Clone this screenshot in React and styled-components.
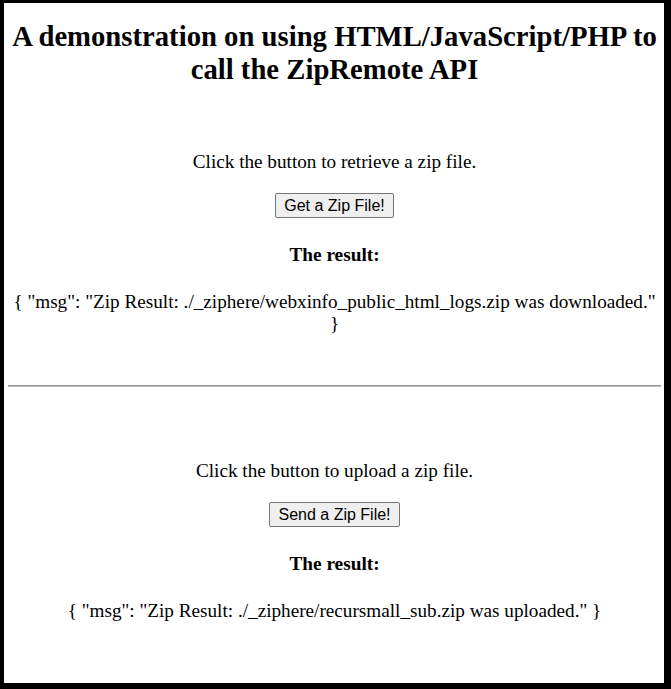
import React from "react";
import styled, { createGlobalStyle } from "styled-components";

const Global = createGlobalStyle`
  html, body { margin: 0; padding: 0; background: #000; }
  body { font-family: "Liberation Serif", "Times New Roman", serif; color: #000; }
`;

const Frame = styled.div`
  box-sizing: border-box;
  width: 671px;
  height: 689px;
  border-style: solid;
  border-color: #000;
  border-width: 3px 7px 6px 4px;
  background: #fff;
  padding: 0 3px 0 4px;
  overflow: hidden;
`;

const Title = styled.h1`
  margin: 17px 0 0;
  font-size: 28.7px;
  line-height: 33px;
  font-weight: bold;
  text-align: center;
`;

const Section = styled.section`
  display: flex;
  flex-direction: column;
  align-items: center;
  text-align: center;
  padding-top: ${(p) => p.$top}px;
`;

const Text = styled.p`
  margin: 0;
  font-size: 19.2px;
  line-height: 21px;
`;

const Button = styled.button`
  margin-top: 21px;
  height: 25px;
  padding: 0 8px;
  font-family: Arial, "Liberation Sans", sans-serif;
  font-size: 16px;
  color: #000;
  background: #efefef;
  border: 1px solid #767676;
  border-radius: 2px;
`;

const ResultLabel = styled.h4`
  margin: 26px 0 0;
  font-size: 19.3px;
  line-height: 21px;
  font-weight: bold;
`;

const Json = styled.p`
  margin: 26px 0 0;
  font-size: 19.2px;
  line-height: 22px;
`;

const Rule = styled.hr`
  margin: 50px 0 0;
  height: 0;
  border: none;
  border-top: 1px solid #999;
  border-bottom: 1px solid #bbb;
`;

export default function App() {
  return (
    <>
      <Global />
      <Frame>
        <Title>A demonstration on using HTML/JavaScript/PHP to call the ZipRemote API</Title>
        <Section $top={65}>
          <Text>Click the button to retrieve a zip file.</Text>
          <Button>Get a Zip File!</Button>
          <ResultLabel>The result:</ResultLabel>
          <Json>{'{ "msg": "Zip Result: ./_ziphere/webxinfo_public_html_logs.zip was downloaded." }'}</Json>
        </Section>
        <Rule />
        <Section $top={73}>
          <Text>Click the button to upload a zip file.</Text>
          <Button>Send a Zip File!</Button>
          <ResultLabel>The result:</ResultLabel>
          <Json>{'{ "msg": "Zip Result: ./_ziphere/recursmall_sub.zip was uploaded." }'}</Json>
        </Section>
      </Frame>
    </>
  );
}
